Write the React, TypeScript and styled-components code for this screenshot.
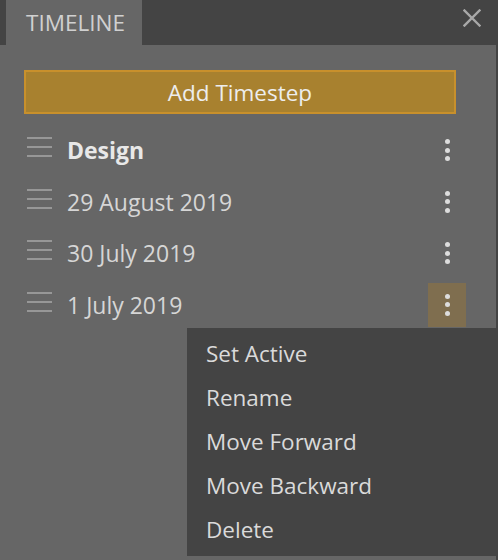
import React from "react";
import styled, { createGlobalStyle } from "styled-components";

const GlobalStyle = createGlobalStyle`
  html, body { margin: 0; padding: 0; background: #444444; }
  body { font-family: "Open Sans", "Noto Sans", sans-serif; }
  * { box-sizing: border-box; }
`;

const Page = styled.div`
  width: 498px;
  height: 560px;
  display: flex;
  flex-direction: column;
  background: #444444;
  overflow: hidden;
`;

const Header = styled.div`
  height: 45px;
  display: flex;
  align-items: stretch;
  justify-content: space-between;
  flex-shrink: 0;
`;

const Tab = styled.div`
  margin-left: 6px;
  width: 136px;
  background: #666666;
  color: #d0d0d0;
  font-size: 22.5px;
  line-height: 45px;
  padding-left: 20px;
`;

const CloseButton = styled.button`
  background: none;
  border: none;
  padding: 0;
  margin: 8px 16px 0 0;
  width: 20px;
  height: 20px;
  display: flex;
  align-items: center;
  justify-content: center;
  cursor: pointer;
`;

const Panel = styled.div`
  position: relative;
  flex: 1;
  width: 496px;
  background: #666666;
  padding: 25px 40px 0 24px;
`;

const AddButton = styled.button`
  width: 100%;
  height: 44px;
  background: #a8812f;
  border: 2px solid #c8902c;
  color: #ededed;
  font-family: "Open Sans", "Noto Sans", sans-serif;
  font-size: 22.5px;
  padding: 0;
  cursor: pointer;
`;

const List = styled.div`
  margin-top: 14px;
  margin-right: -10px;
  display: flex;
  flex-direction: column;
  gap: 7.67px;
`;

const Row = styled.div`
  height: 44px;
  display: flex;
  align-items: center;
`;

const Handle = styled.div`
  margin-left: 3px;
  width: 25px;
  height: 20px;
  display: flex;
  flex-direction: column;
  justify-content: space-between;
  margin-top: -6px;
`;

const HandleLine = styled.span`
  display: block;
  height: 2px;
  background: #979797;
`;

const Label = styled.span<{ $bold?: boolean }>`
  margin-left: 15px;
  flex: 1;
  font-size: 23px;
  font-weight: ${(p) => (p.$bold ? 700 : 400)};
  color: ${(p) => (p.$bold ? "#e8e8e8" : "#d6d6d6")};
`;

const Kebab = styled.button<{ $active?: boolean }>`
  width: 38px;
  height: 44px;
  border: none;
  padding: 0;
  background: ${(p) => (p.$active ? "#7f6e4f" : "transparent")};
  display: flex;
  flex-direction: column;
  align-items: center;
  justify-content: center;
  gap: 3.5px;
  cursor: pointer;
`;

const Dot = styled.span`
  width: 5px;
  height: 5px;
  border-radius: 50%;
  background: #dddddd;
`;

const Menu = styled.div`
  position: absolute;
  left: 187px;
  top: 283px;
  width: 309px;
  height: 228px;
  background: #444444;
  padding: 4px 0;
  display: flex;
  flex-direction: column;
`;

const MenuItem = styled.div`
  height: 44px;
  line-height: 44px;
  padding-left: 19px;
  font-size: 22.5px;
  color: #dadada;
  cursor: pointer;
`;

const rows = [
  { label: "Design", bold: true },
  { label: "29 August 2019" },
  { label: "30 July 2019" },
  { label: "1 July 2019", active: true },
];

const menuItems = ["Set Active", "Rename", "Move Forward", "Move Backward", "Delete"];

export default function App() {
  return (
    <Page>
      <GlobalStyle />
      <Header>
        <Tab>TIMELINE</Tab>
        <CloseButton aria-label="Close">
          <svg width="18" height="18" viewBox="0 0 18 18">
            <path d="M1.5 1.5 L16.5 16.5 M16.5 1.5 L1.5 16.5" stroke="#a8a8a8" strokeWidth="2.4" strokeLinecap="square" />
          </svg>
        </CloseButton>
      </Header>
      <Panel>
        <AddButton>Add Timestep</AddButton>
        <List>
          {rows.map((r) => (
            <Row key={r.label}>
              <Handle>
                <HandleLine />
                <HandleLine />
                <HandleLine />
              </Handle>
              <Label $bold={r.bold}>{r.label}</Label>
              <Kebab $active={r.active} aria-label="More">
                <Dot />
                <Dot />
                <Dot />
              </Kebab>
            </Row>
          ))}
        </List>
        <Menu>
          {menuItems.map((m) => (
            <MenuItem key={m}>{m}</MenuItem>
          ))}
        </Menu>
      </Panel>
    </Page>
  );
}
